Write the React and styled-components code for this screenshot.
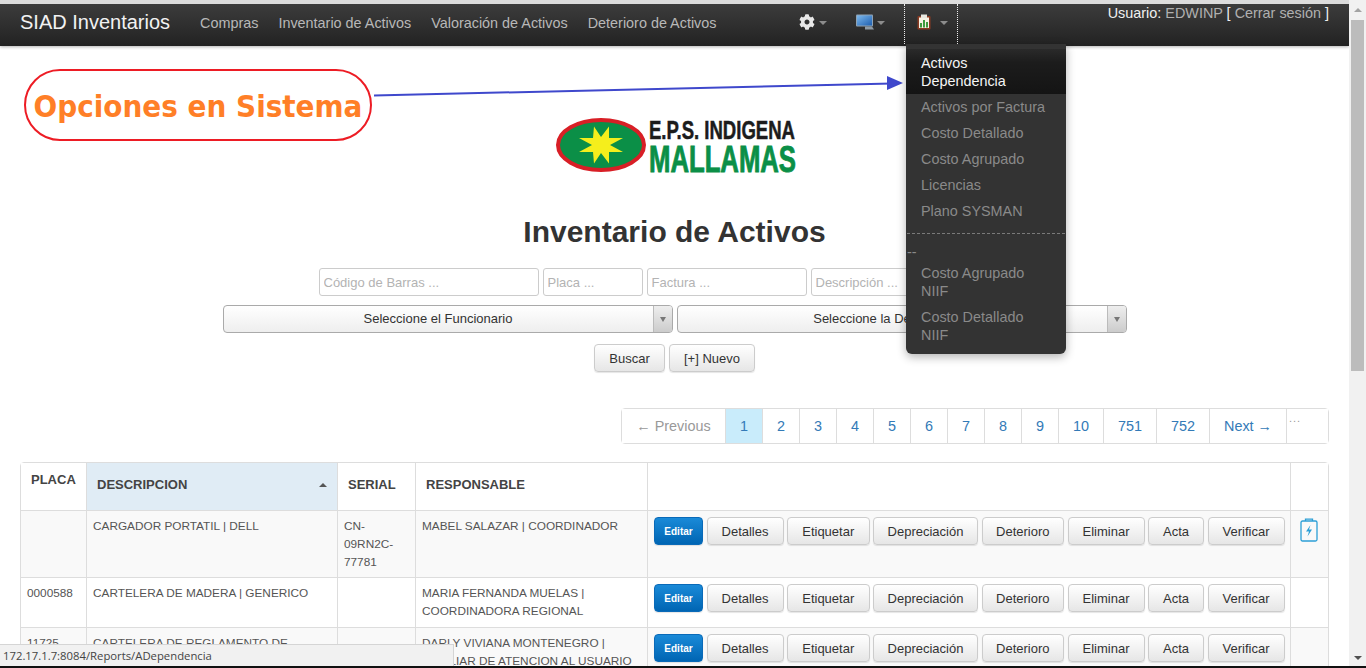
import styled, { createGlobalStyle } from "styled-components";
import { FaCog } from "react-icons/fa";

const GlobalStyle = createGlobalStyle`
  html, body {
    margin: 0;
    padding: 0;
    overflow: hidden;
    background: #fff;
    font-family: "Liberation Sans", Arial, sans-serif;
    font-size: 14px;
    color: #333;
  }
  * { box-sizing: border-box; }
`;

const Screen = styled.div`
  position: relative;
  width: 1366px;
  height: 668px;
  overflow: hidden;
  display: flex;
`;

const Page = styled.div`
  width: 1349px;
  height: 666px;
  overflow: hidden;
  border-top: 4px solid #dcdcdc;
`;

const ScrollBar = styled.div`
  width: 17px;
  height: 666px;
  background: #f1f1f1;
  display: flex;
  flex-direction: column;
  align-items: stretch;
`;

const ScrollArrow = styled.div`
  height: ${(p) => (p.$down ? 17 : 20)}px;
  display: flex;
  align-items: center;
  justify-content: center;
  flex: none;
  &::before {
    content: "";
    border-left: 4px solid transparent;
    border-right: 4px solid transparent;
    ${(p) => (p.$down ? "border-top: 4px solid #505050;" : "border-bottom: 4px solid #a3a3a3;")}
  }
`;

const ScrollThumb = styled.div`
  height: 351px;
  margin: 0 2px;
  background: #bcbcbc;
  flex: none;
`;

const ScrollRest = styled.div`
  flex: 1;
`;

const BottomStrip = styled.div`
  position: absolute;
  left: 0;
  bottom: 0;
  width: 100%;
  height: 2px;
  background: #111;
`;

const Navbar = styled.nav`
  height: 42px;
  position: relative;
  display: flex;
  align-items: flex-start;
  padding-left: 20px;
  background: linear-gradient(to bottom, #3c3c3c 0, #222 100%);
  box-shadow: 0 1px 3px rgba(0, 0, 0, 0.3);
`;

const Brand = styled.a`
  font-size: 20px;
  line-height: 36px;
  color: #f2f2f2;
  width: 170px;
  flex: none;
`;

const NavLink = styled.a`
  font-size: 14.4px;
  line-height: 38px;
  color: #b8b8b8;
  padding: 0 10px;
  flex: none;
`;

const NavLinks = styled.div`
  display: flex;
  width: 570px;
  flex: none;
`;

const IconItem = styled.div`
  height: 40px;
  padding-bottom: 4px;
  display: flex;
  align-items: center;
  flex: none;
  width: ${(p) => p.$width}px;
  padding-left: ${(p) => p.$pad}px;
  gap: ${(p) => p.$gap || 4}px;
  ${(p) => (p.$open ? "border-left: 1px dotted #eee; border-right: 1px dotted #eee;" : "")}
`;

const Caret = styled.span`
  width: 0;
  height: 0;
  margin-top: 2px;
  border-left: 4px solid transparent;
  border-right: 4px solid transparent;
  border-top: 4px solid #8c8c8c;
`;

const GearIcon = styled(FaCog)`
  width: 16px;
  height: 16px;
  color: #e8e8e8;
`;

const UserBox = styled.div`
  position: absolute;
  right: 20px;
  top: 0;
  font-size: 14.4px;
  line-height: 18px;
  color: #f0f0f0;
`;

const UserMuted = styled.span`
  color: #b0b0b0;
`;

const Menu = styled.div`
  position: absolute;
  left: 906px;
  top: 44px;
  width: 160px;
  height: 310px;
  background: #333;
  border-radius: 0 0 6px 6px;
  box-shadow: 0 3px 10px rgba(0, 0, 0, 0.3);
  padding-top: 5px;
  font-size: 14.4px;
  line-height: 18px;
  z-index: 5;
`;

const MenuActive = styled.div`
  padding: 5px 15px 4px;
  height: 45px;
  color: #f5f5f5;
  background: linear-gradient(to bottom, #2a2a2a 0, #1c1c1c 30%, #141414 100%);
`;

const MenuItem = styled.div`
  padding: 4px 15px;
  color: #8a8a8a;
`;

const MenuDivider = styled.div`
  margin: 9px 1px 0;
  border-top: 1px dashed #7a7a7a;
`;

const MenuDash = styled.div`
  padding: 9px 1px 0;
  height: 26px;
  color: #8a8a8a;
  line-height: 18px;
`;

const Callout = styled.div`
  position: absolute;
  left: 24px;
  top: 69px;
  width: 348px;
  height: 72px;
  padding-top: 2px;
  border: 2px solid #ed1c24;
  border-radius: 36px;
  background: #fff;
  display: flex;
  align-items: center;
  justify-content: center;
  font-family: "DejaVu Sans Condensed", "Noto Sans", sans-serif;
  font-weight: bold;
  font-size: 31px;
  color: #ff7f27;
  white-space: nowrap;
  z-index: 4;
`;

const ArrowSvg = styled.svg`
  position: absolute;
  left: 370px;
  top: 70px;
  z-index: 4;
`;

const Content = styled.main`
  padding: 69px 20px 0;
  display: flex;
  flex-direction: column;
  align-items: center;
`;

const LogoSvg = styled.svg`
  display: block;
  flex: none;
`;

const Title = styled.h1`
  margin: 32px 0 0;
  font-size: 30px;
  line-height: 38px;
  font-weight: bold;
  color: #333;
  text-align: center;
`;

const FilterRow = styled.div`
  margin-top: 17px;
  display: flex;
  justify-content: center;
  gap: 4px;
`;

const TextInput = styled.input`
  width: ${(p) => p.$width}px;
  height: 28px;
  padding: 0 4px;
  border: 1px solid #ccc;
  border-radius: 3px;
  font: 13px "Liberation Sans", Arial, sans-serif;
  background: #fff;
  &::placeholder { color: #b3b3b3; opacity: 1; }
`;

const SelectRow = styled.div`
  margin-top: 9px;
  display: flex;
  justify-content: center;
  gap: 4px;
`;

const Select = styled.div`
  width: 450px;
  height: 28px;
  display: flex;
  border: 1px solid #aaa;
  border-radius: 4px;
  background: linear-gradient(to bottom, #fff 0, #eee 100%);
  font-size: 13px;
  color: #333;
  overflow: hidden;
`;

const SelectLabel = styled.div`
  flex: 1;
  text-align: center;
  line-height: 26px;
`;

const SelectArrow = styled.div`
  width: 19px;
  border-left: 1px solid #bbb;
  background: linear-gradient(to bottom, #eee 0, #ccc 100%);
  display: flex;
  align-items: center;
  justify-content: center;
  &::before {
    content: "";
    border-left: 3px solid transparent;
    border-right: 3px solid transparent;
    border-top: 5px solid #777;
  }
`;

const ActionRow = styled.div`
  margin-top: 11px;
  display: flex;
  justify-content: center;
  gap: 4px;
`;

const Btn = styled.button`
  width: ${(p) => p.$width}px;
  height: 28px;
  padding: 0;
  border: 1px solid #ccc;
  border-radius: 4px;
  background: linear-gradient(to bottom, #fff 0, #e6e6e6 100%);
  box-shadow: 0 1px 1px rgba(0, 0, 0, 0.1);
  font: 13px "Liberation Sans", Arial, sans-serif;
  color: #333;
  flex: none;
  white-space: nowrap;
`;

const EditBtn = styled(Btn)`
  font-size: 10px;
  font-weight: bold;
  color: #fff;
  border-color: #0a6ab8;
  background: linear-gradient(to bottom, #1a8ad8 0, #0065b3 100%);
`;

const Pagination = styled.div`
  margin-top: 36px;
  align-self: flex-end;
  height: 36px;
  display: flex;
  border: 1px solid #ddd;
  border-radius: 4px;
  background: #fff;
  font-size: 14.4px;
`;

const PageItem = styled.a`
  width: ${(p) => p.$width}px;
  line-height: 34px;
  text-align: center;
  color: ${(p) => (p.$muted ? "#999" : "#337ab7")};
  background: ${(p) => (p.$active ? "#c9ecfb" : "#fff")};
  ${(p) => (p.$last ? "" : "border-right: 1px solid #ddd;")}
`;

const PageDots = styled(PageItem)`
  color: #999;
  text-align: left;
  font-size: 11px;
  line-height: 18px;
  padding-left: 2px;
  letter-spacing: 1px;
`;

const Table = styled.table`
  margin-top: 18px;
  width: 1309px;
  border-collapse: separate;
  border-spacing: 0;
  table-layout: fixed;
  border: 1px solid #ddd;
  border-radius: 4px;
  font-size: 11.8px;
  line-height: 18px;
  flex: none;
`;

const Th = styled.th`
  height: 47px;
  padding: ${(p) => (p.$top ? "8px 10px 0" : "0 10px 4px")};
  text-align: left;
  vertical-align: ${(p) => (p.$top ? "top" : "middle")};
  font-size: 13px;
  font-weight: bold;
  color: #444;
  border-left: ${(p) => (p.$first ? "0" : "1px solid #ddd")};
  background: ${(p) => (p.$sorted ? "#e0ecf5" : "#fff")};
  position: relative;
`;

const SortCaret = styled.span`
  position: absolute;
  right: 10px;
  top: 20px;
  border-left: 4px solid transparent;
  border-right: 4px solid transparent;
  border-bottom: 4px solid #555;
`;

const Td = styled.td`
  padding: 6px;
  vertical-align: top;
  color: #555;
  border-top: 1px solid #ddd;
  border-left: ${(p) => (p.$first ? "0" : "1px solid #ddd")};
  background: ${(p) => (p.$odd ? "#f9f9f9" : "#fff")};
  overflow-wrap: break-word;
`;

const ButtonBar = styled.div`
  display: flex;
  gap: 3.5px;
`;

const StatusBar = styled.div`
  position: absolute;
  left: 0;
  bottom: 2px;
  width: 454px;
  height: 22px;
  padding-left: 3px;
  background: #f1f1f1;
  border-top: 1px solid #d5d5d5;
  border-right: 1px solid #d5d5d5;
  font-family: "Open Sans", "Noto Sans", sans-serif;
  font-size: 11.3px;
  line-height: 21px;
  color: #444;
  z-index: 6;
`;

const BatteryIcon = () => (
  <svg width="18" height="24" viewBox="0 0 18 24" fill="none" stroke="#2c9fd6" strokeWidth="1.3" style={{ display: "block", margin: "1px 0 0 3px" }}>
    <path d="M5.5 3V1.2h7V3" />
    <rect x="1" y="3" width="16" height="20" rx="1.5" />
    <path d="M10.5 7 6 13.5h3L7.5 18.5l4.5-7H9z" fill="#2c9fd6" stroke="none" />
  </svg>
);

const MonitorIcon = () => (
  <svg width="19" height="16" viewBox="0 0 19 16">
    <defs>
      <linearGradient id="mon" x1="0" y1="0" x2="1" y2="1">
        <stop offset="0" stopColor="#7db8ec" />
        <stop offset="1" stopColor="#1d5fb0" />
      </linearGradient>
    </defs>
    <rect x="0" y="0.5" width="17" height="12" rx="1" fill="#8fa3b5" />
    <rect x="1" y="1.5" width="15" height="10" fill="url(#mon)" />
    <path d="M9 12.5h7l2 3H9z" fill="#8d9aa5" />
  </svg>
);

const ClipboardIcon = () => (
  <svg width="14" height="16" viewBox="0 0 14 16">
    <rect x="0.5" y="2" width="13" height="13.5" rx="1" fill="#8a3a22" />
    <rect x="2" y="3.5" width="10" height="10.5" fill="#f6f2e4" />
    <rect x="4" y="0.5" width="6" height="3.5" fill="#e8e8e0" />
    <rect x="3" y="9" width="2" height="4.5" fill="#3d9a3d" />
    <rect x="6" y="6" width="2" height="7.5" fill="#3d9a3d" />
    <rect x="9" y="8" width="2" height="5.5" fill="#3d9a3d" />
  </svg>
);

const Logo = () => (
  <LogoSvg width="244" height="66" viewBox="-1 0 244 66">
    <ellipse cx="47" cy="30" rx="43" ry="25" fill="#0b8f47" stroke="#d81f26" strokeWidth="4" />
    <path
      transform="translate(47 30)"
      d="M-7-18.5 0-8 8-18.5 8-7 22-7 9 0 22 7 8 7 8 18.5 0 8-7 18.5-8 7-22 7-9 0-22-7-8-7Z"
      fill="#f5ee1c"
    />
    <text x="95" y="24" textLength="146" lengthAdjust="spacingAndGlyphs" fontFamily="Liberation Sans, Arial, sans-serif" fontWeight="bold" fontSize="25" fill="#1c1c1c" stroke="#1c1c1c" strokeWidth="0.5">
      E.P.S. INDIGENA
    </text>
    <text x="95" y="57" textLength="147" lengthAdjust="spacingAndGlyphs" fontFamily="Liberation Sans, Arial, sans-serif" fontWeight="bold" fontSize="36" fill="#0b8f47" stroke="#0b8f47" strokeWidth="0.9">
      MALLAMAS
    </text>
  </LogoSvg>
);

const pages = [
  ["← Previous", 104, false, true],
  ["1", 37, true],
  ["2", 37],
  ["3", 37],
  ["4", 37],
  ["5", 37],
  ["6", 37],
  ["7", 37],
  ["8", 37],
  ["9", 37],
  ["10", 45],
  ["751", 53],
  ["752", 53],
  ["Next →", 77],
];

const rows = [
  { placa: "", desc: "CARGADOR PORTATIL | DELL", serial: "CN-09RN2C-77781", resp: "MABEL SALAZAR | COORDINADOR", battery: true, odd: true, h: 67 },
  { placa: "0000588", desc: "CARTELERA DE MADERA | GENERICO", serial: "", resp: "MARIA FERNANDA MUELAS | COORDINADORA REGIONAL", h: 50 },
  { placa: "11725", desc: "CARTELERA DE REGLAMENTO DE TRABAJO | GENERICO", serial: "", resp: "DARLY VIVIANA MONTENEGRO | AUXILIAR DE ATENCION AL USUARIO", odd: true, h: 50 },
];

const actions = [
  ["Detalles", 77],
  ["Etiquetar", 82.5],
  ["Depreciación", 105],
  ["Deterioro", 82.5],
  ["Eliminar", 77],
  ["Acta", 56],
  ["Verificar", 77],
];

export default function App() {
  return (
    <Screen>
      <GlobalStyle />
      <Page>
        <Navbar>
          <Brand>SIAD Inventarios</Brand>
          <NavLinks>
            <NavLink>Compras</NavLink>
            <NavLink>Inventario de Activos</NavLink>
            <NavLink>Valoración de Activos</NavLink>
            <NavLink>Deterioro de Activos</NavLink>
          </NavLinks>
          <IconItem $width={96} $pad={39}>
            <GearIcon />
            <Caret />
          </IconItem>
          <IconItem $width={48} $pad={0} $gap={2}>
            <MonitorIcon />
            <Caret />
          </IconItem>
          <IconItem $open $width={54} $pad={12} $gap={9}>
            <ClipboardIcon />
            <Caret />
          </IconItem>
          <UserBox>
            Usuario: <UserMuted>EDWINP</UserMuted> [ <UserMuted>Cerrar sesión</UserMuted> ]
          </UserBox>
        </Navbar>
        <Content>
          <Logo />
          <Title>Inventario de Activos</Title>
          <FilterRow>
            <TextInput $width={220} placeholder="Código de Barras ..." />
            <TextInput $width={100} placeholder="Placa ..." />
            <TextInput $width={160} placeholder="Factura ..." />
            <TextInput $width={220} placeholder="Descripción ..." />
          </FilterRow>
          <SelectRow>
            <Select>
              <SelectLabel>Seleccione el Funcionario</SelectLabel>
              <SelectArrow />
            </Select>
            <Select>
              <SelectLabel>Seleccione la Dependencia</SelectLabel>
              <SelectArrow />
            </Select>
          </SelectRow>
          <ActionRow>
            <Btn $width={71}>Buscar</Btn>
            <Btn $width={86}>[+] Nuevo</Btn>
          </ActionRow>
          <Pagination>
            {pages.map(([label, width, active, muted]) => (
              <PageItem key={label} $width={width} $active={active} $muted={muted}>
                {label}
              </PageItem>
            ))}
            <PageDots $width={41} $last>
              ...
            </PageDots>
          </Pagination>
          <Table>
            <colgroup>
              <col width="65" />
              <col width="251" />
              <col width="78" />
              <col width="232" />
              <col width="643" />
              <col width="38" />
            </colgroup>
            <thead>
              <tr>
                <Th $first $top>PLACA</Th>
                <Th $sorted>
                  DESCRIPCION
                  <SortCaret />
                </Th>
                <Th>SERIAL</Th>
                <Th>RESPONSABLE</Th>
                <Th />
                <Th />
              </tr>
            </thead>
            <tbody>
              {rows.map((row) => (
                <tr key={row.desc} style={{ height: row.h }}>
                  <Td $first $odd={row.odd}>{row.placa}</Td>
                  <Td $odd={row.odd}>{row.desc}</Td>
                  <Td $odd={row.odd}>{row.serial}</Td>
                  <Td $odd={row.odd}>{row.resp}</Td>
                  <Td $odd={row.odd}>
                    <ButtonBar>
                      <EditBtn $width={49}>Editar</EditBtn>
                      {actions.map(([label, width]) => (
                        <Btn key={label} $width={width}>{label}</Btn>
                      ))}
                    </ButtonBar>
                  </Td>
                  <Td $odd={row.odd}>{row.battery && <BatteryIcon />}</Td>
                </tr>
              ))}
            </tbody>
          </Table>
        </Content>
      </Page>
      <ScrollBar>
        <ScrollArrow />
        <ScrollThumb />
        <ScrollRest />
        <ScrollArrow $down />
      </ScrollBar>
      <Callout>Opciones en Sistema</Callout>
      <ArrowSvg width="540" height="34" viewBox="0 0 540 34">
        <path d="M4 25.5 522 13.5" stroke="#3f48cc" strokeWidth="2" fill="none" />
        <path d="M517 6 533 13 517 20Z" fill="#3f48cc" />
      </ArrowSvg>
      <Menu>
        <MenuActive>Activos Dependencia</MenuActive>
        <MenuItem>Activos por Factura</MenuItem>
        <MenuItem>Costo Detallado</MenuItem>
        <MenuItem>Costo Agrupado</MenuItem>
        <MenuItem>Licencias</MenuItem>
        <MenuItem>Plano SYSMAN</MenuItem>
        <MenuDivider />
        <MenuDash>--</MenuDash>
        <MenuItem>Costo Agrupado NIIF</MenuItem>
        <MenuItem>Costo Detallado NIIF</MenuItem>
      </Menu>
      <StatusBar>172.17.1.7:8084/Reports/ADependencia</StatusBar>
      <BottomStrip />
    </Screen>
  );
}
